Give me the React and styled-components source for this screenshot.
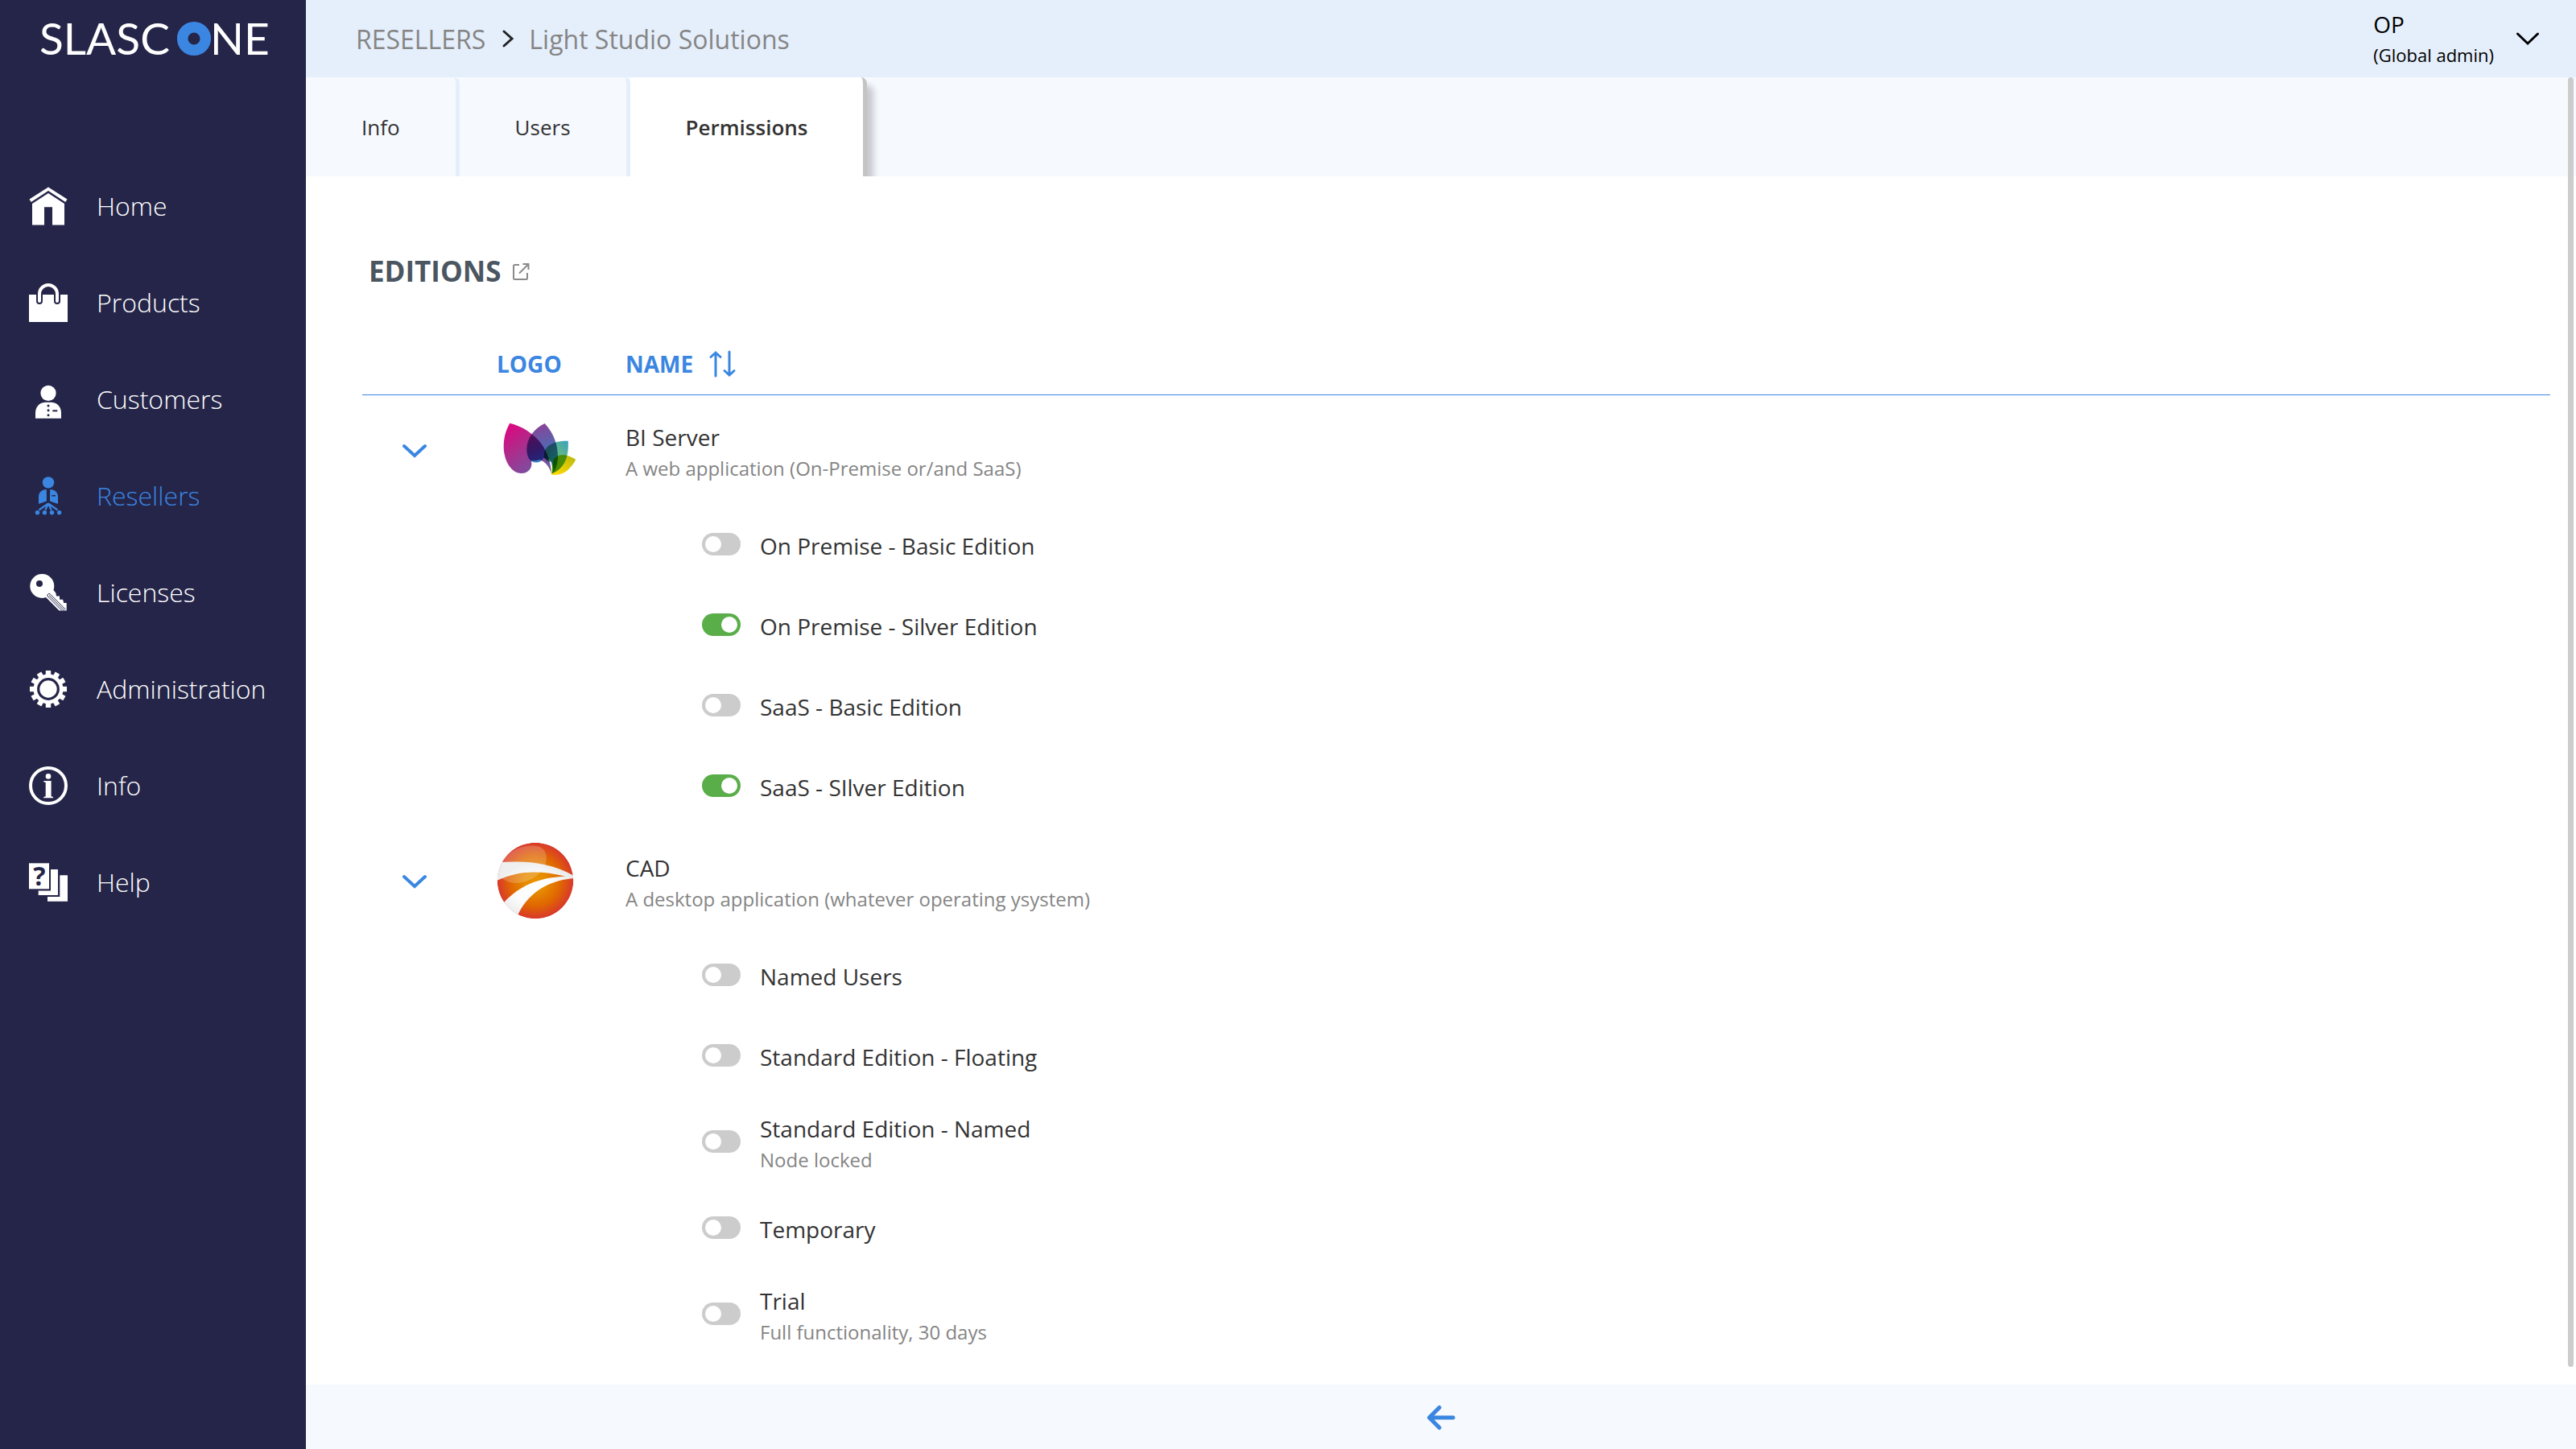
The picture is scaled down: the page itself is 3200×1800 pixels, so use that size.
import React, { useState } from 'react';
import styled, { createGlobalStyle } from 'styled-components';

const GlobalStyle = createGlobalStyle`
  * {
    box-sizing: border-box;
  }

  body {
    margin: 0;
    background: #fff;
    color: #333;
    font-family: 'Open Sans', sans-serif;
    font-size: 28px;
  }

  svg {
    display: block;
    flex-shrink: 0;
    overflow: visible;
  }

  button {
    padding: 0;
    border: none;
    background: none;
    color: inherit;
    font: inherit;
    cursor: pointer;
  }

  a {
    color: inherit;
    text-decoration: none;
  }
`;

const Page = styled.div`
  display: flex;
  min-height: 100vh;
`;

const Sidebar = styled.aside`
  width: 380px;
  flex-shrink: 0;
  background: #252549;
  color: #fff;
`;

const LogoLink = styled.a`
  display: flex;
  align-items: center;
  justify-content: center;
  height: 96px;
`;

const LogoText = styled.text`
  font-family: Lato, sans-serif;
  font-size: 55px;
  fill: #fff;
`;

const Nav = styled.nav`
  display: flex;
  flex-direction: column;
  padding-top: 100px;
`;

const NavItem = styled.a`
  display: flex;
  align-items: center;
  gap: 36px;
  height: 120px;
  padding-left: 36px;
  font-size: 32px;
  font-weight: 300;
  color: ${({ $active }) => ($active ? '#3b86e1' : '#fff')};

  span {
    padding-bottom: 2px;
  }
`;

const IconText = styled.text`
  font-family: 'Open Sans', sans-serif;
  font-size: 32px;
  font-weight: 700;
  fill: #252549;
`;

const Main = styled.main`
  display: flex;
  flex: 1;
  flex-direction: column;
  min-width: 0;
`;

const Header = styled.header`
  display: flex;
  align-items: center;
  justify-content: space-between;
  height: 96px;
  padding: 0 46px 0 62px;
  background: #e5effc;
`;

const Breadcrumb = styled.nav`
  display: flex;
  align-items: center;
  gap: 18px;
  font-size: 32px;
  color: #858585;
`;

const UserMenu = styled.button`
  display: flex;
  align-items: center;
  gap: 28px;
  color: #000;
  text-align: left;
`;

const UserName = styled.div`
  font-size: 28px;
  line-height: 40px;
`;

const UserRole = styled.div`
  font-size: 22px;
  line-height: 36px;
`;

const Body = styled.div`
  position: relative;
  flex: 1;
`;

const ScrollThumb = styled.div`
  position: absolute;
  top: 0;
  right: 3px;
  bottom: 22px;
  width: 7px;
  border-radius: 4px;
  background: #ccc;
`;

const Tabs = styled.div`
  display: flex;
  height: 123px;
  overflow: hidden;
  background: #f6f9fe;
`;

const Tab = styled.button`
  padding: 0 69px;
  border-right: 5px solid #e5effc;
  border-top-right-radius: 8px;
  font-size: 26px;
  color: #333;

  &.active {
    border-right-color: #c4c4c4;
    background: #fff;
    box-shadow: 8px 10px 8px rgba(0, 0, 0, 0.2);
    font-weight: 600;
  }
`;

const Section = styled.section`
  padding: 94px 32px 31px 70px;
`;

const SectionTitle = styled.h2`
  display: flex;
  align-items: center;
  gap: 12px;
  margin: 0 0 50px;
  padding-left: 8px;
  font-size: 35px;
  font-weight: 700;
  line-height: 48px;
  color: #4b5661;
`;

const Table = styled.table`
  width: 100%;
  table-layout: fixed;
  border-spacing: 0;

  td {
    padding: 0;
  }
`;

const Col = styled.col`
  width: ${({ $width }) => $width};
`;

const Th = styled.th`
  height: 80px;
  padding: 2px 0 0;
  border-bottom: 1px solid #3b86e1;
  font-weight: 700;
  text-align: left;
  color: #3b86e1;
`;

const SortButton = styled.button`
  display: flex;
  align-items: center;
  gap: 20px;
`;

const ProductRow = styled.tr`
  height: 135px;
`;

const ExpandButton = styled.button`
  display: block;
  margin-left: 50px;
  padding-top: 2px;
  color: #3b86e1;
`;

const ProductLogo = styled.svg`
  isolation: isolate;

  .petal {
    mix-blend-mode: multiply;
  }
`;

const Text = styled.div`
  padding-top: 4px;
`;

const Title = styled.div`
  font-size: 28px;
  line-height: 42px;
`;

const Description = styled.div`
  font-size: 24px;
  line-height: 36px;
  color: #858585;
`;

const Edition = styled.label`
  display: flex;
  align-items: center;
  gap: 24px;
  height: ${({ $tall }) => ($tall ? '114px' : '100px')};
  padding-left: 95px;
  cursor: pointer;
`;

const Toggle = styled.input`
  display: flex;
  align-items: center;
  width: 48px;
  height: 28px;
  margin: 0;
  padding: 0 4px;
  appearance: none;
  border-radius: 14px;
  background: #ccc;
  cursor: pointer;

  &::before {
    content: '';
    width: 20px;
    height: 20px;
    border-radius: 50%;
    background: #fff;
  }

  &:checked {
    justify-content: flex-end;
    background: #5aae4a;
  }
`;

const Footer = styled.footer`
  display: flex;
  align-items: center;
  justify-content: center;
  height: 80px;
  padding-top: 2px;
  background: #f6f9fe;
  color: #3b86e1;
`;

const NavIcon = ({ children }) => (
  <svg width='48' height='48' viewBox='0 0 48 48' fill='currentColor'>
    {children}
  </svg>
);

const HomeIcon = () => (
  <NavIcon>
    <path d='M24 .6 47.5 15.6 45.3 19 24 5 2.7 19 .5 15.6Z' />
    <path d='M24 8 44 21V47.5H29V25.3H19V47.5H4V21Z' />
  </NavIcon>
);

const ProductsIcon = () => (
  <NavIcon>
    <path d='M0 14H48V48H0Z' />
    <path
      d='M13 22V13a11 11 0 0 1 22 0V22'
      fill='none'
      stroke='#252549'
      strokeWidth='8'
      strokeLinecap='round'
    />
    <path
      d='M13 22V13a11 11 0 0 1 22 0V22'
      fill='none'
      stroke='currentColor'
      strokeWidth='4'
      strokeLinecap='round'
    />
  </NavIcon>
);

const CustomersIcon = () => (
  <NavIcon>
    <circle cx='24' cy='16.4' r='9.6' />
    <path d='M8 47.7V41C8 33 13.5 27.7 20.5 27.7H27.5C34.5 27.7 40 33 40 41V47.7Z' />
    <g fill='#252549'>
      <circle cx='24' cy='32' r='1.5' />
      <circle cx='24' cy='37.8' r='1.5' />
      <circle cx='24' cy='43.7' r='1.5' />
      <path d='M29.3 37.3H35.3V39.3H29.3Z' />
    </g>
  </NavIcon>
);

const ResellersIcon = () => (
  <NavIcon>
    <circle cx='24' cy='7.4' r='7.2' />
    <path d='M21.8 16C15.5 16 12 20 12 25V34L22 30.6Z' />
    <path d='M26.2 16C32.5 16 36 20 36 25V34L26 30.6Z' />
    <path d='M22.7 17.5H25.3L25.8 28 24 30 22.2 28Z' fill='#252549' />
    <path d='M28.3 23H33V24.5H28.3Z' fill='#252549' />
    <path
      d='M24 33.5 12.5 41.5M24 33.5 20.3 41.5M24 33.5 27.7 41.5M24 33.5 35.5 41.5'
      stroke='currentColor'
      strokeWidth='2.2'
    />
    <circle cx='10.5' cy='44.7' r='2.7' />
    <circle cx='19.4' cy='44.7' r='2.7' />
    <circle cx='28.5' cy='44.7' r='2.7' />
    <circle cx='37.6' cy='44.7' r='2.7' />
  </NavIcon>
);

const LicensesIcon = () => (
  <NavIcon>
    <path d='M20.5 29.5 37.5 46.5H46.7V37H43.3L42 32.7H38V28.4H34L33.3 24.5 29.5 20Z' />
    <circle cx='16.3' cy='16' r='15' />
    <circle cx='13' cy='13' r='4' fill='#252549' />
    <path
      d='M41 46.5 23.5 29 22.8 27 24.5 25.3 26.3 26 45.5 45.2M25 27.6 44 46.5'
      fill='none'
      stroke='#252549'
      strokeWidth='1'
    />
  </NavIcon>
);

const AdministrationIcon = () => (
  <NavIcon>
    {Array.from({ length: 12 }, (_, i) => (
      <rect
        key={i}
        x='20.8'
        y='1'
        width='6.4'
        height='8'
        transform={`rotate(${i * 30} 24 24)`}
      />
    ))}
    <circle
      cx='24'
      cy='24'
      r='16.2'
      fill='none'
      stroke='currentColor'
      strokeWidth='4.6'
    />
    <circle cx='24' cy='24' r='10.7' />
  </NavIcon>
);

const InfoIcon = () => (
  <NavIcon>
    <circle
      cx='24'
      cy='24'
      r='22'
      fill='none'
      stroke='currentColor'
      strokeWidth='4'
    />
    <circle cx='24' cy='12.4' r='3.3' />
    <path d='M18.2 18H27.6V37.2L30 38V39.2H18.2V38L20.7 37.2V20L18.2 19.3Z' />
  </NavIcon>
);

const HelpIcon = () => (
  <NavIcon>
    <path d='M0 .3H25V32.3H0Z' />
    <path d='M27 8H36V40H11.7V34.4H27Z' />
    <path d='M38.3 15.3H48V47.8H23V42H38.3Z' />
    <IconText x='13' y='28' textAnchor='middle'>
      ?
    </IconText>
  </NavIcon>
);

const Chevron = ({ width = 30, height = 18, stroke = 4 }) => (
  <svg
    width={width}
    height={height}
    viewBox={`0 0 ${width} ${height}`}
    fill='none'
    stroke='currentColor'
    strokeWidth={stroke}
    strokeLinecap='round'
  >
    <path d={`M${stroke / 2} 3 ${width / 2} ${height - 3} ${width - stroke / 2} 3`} />
  </svg>
);

const BiServerLogo = () => (
  <ProductLogo width='100' height='96' viewBox='0 0 100 96'>
    <defs>
      <linearGradient id='magenta' x1='0' y1='0' x2='.7' y2='1'>
        <stop offset='0' stopColor='#e6007e' />
        <stop offset='.45' stopColor='#b02a8a' />
        <stop offset='1' stopColor='#6f57a5' />
      </linearGradient>
      <linearGradient id='purple' x1='.3' y1='0' x2='.5' y2='1'>
        <stop offset='0' stopColor='#8f3f97' />
        <stop offset='.5' stopColor='#5567b0' />
        <stop offset='1' stopColor='#2aa9e0' />
      </linearGradient>
      <linearGradient id='green' x1='1' y1='0' x2='.2' y2='1'>
        <stop offset='0' stopColor='#3a9fc0' />
        <stop offset='.4' stopColor='#5fb88c' />
        <stop offset='1' stopColor='#3a9a50' />
      </linearGradient>
      <linearGradient id='yellow' x1='1' y1='0' x2='.2' y2='1'>
        <stop offset='0' stopColor='#b5b70f' />
        <stop offset='1' stopColor='#ffd900' />
      </linearGradient>
    </defs>
    <path
      className='petal'
      fill='url(#magenta)'
      d='M16.3 14.7C31 18 47 28 56 41C63 51 67 63 68 77.5C65 68 60 62 53 60C49 62 46 61 43 61.5C45 71 39 77 30.7 77C18 77 8.7 61 8.7 44C8.7 33 11 24 16.3 14.7Z'
    />
    <path
      className='petal'
      fill='url(#purple)'
      d='M59.7 15C71 27 76 42 76 56C76 65 73.5 73 68.5 77.5C70 71 69 66 66 60L58 58C56 62 53 63.5 49 63.5C41 63.5 37.3 56 37.3 47C37.3 33 47 21 59.7 15Z'
    />
    <path
      className='petal'
      fill='url(#green)'
      d='M88.7 36.7C90 57 84 71 68.5 77.5C72 72 70 67 68.5 62C64 64 58.7 60 58.7 54C59 42 73 36 88.7 36.7Z'
    />
    <path
      className='petal'
      fill='url(#yellow)'
      d='M98.3 59.7C92 72 82 81 68 78.5C69 72 68 67 70 62C73 52 87 52 98.3 59.7Z'
    />
  </ProductLogo>
);

const CadLogo = () => (
  <ProductLogo width='96' height='96' viewBox='0 0 96 96'>
    <defs>
      <radialGradient id='ball' cx='.5' cy='.5' r='.5'>
        <stop offset='0' stopColor='#ea9400' />
        <stop offset='.3' stopColor='#e68a00' />
        <stop offset='.65' stopColor='#e06800' />
        <stop offset='1' stopColor='#d9382b' />
      </radialGradient>
      <radialGradient id='band' cx='.5' cy='.5' r='.5'>
        <stop offset='0' stopColor='#fff' />
        <stop offset='.5' stopColor='#fcfcfc' />
        <stop offset='1' stopColor='#ebebeb' />
      </radialGradient>
      <clipPath id='ballClip'>
        <circle cx='48' cy='48' r='47.3' />
      </clipPath>
    </defs>
    <g clipPath='url(#ballClip)'>
      <circle cx='48' cy='48' r='47.3' fill='url(#ball)' />
      <path
        fill='url(#band)'
        d='M0 25.5C34 23 64 24 96 42V45C72 47 42 57 26 91L14 96 0 82 9 75C28 55 50 44.5 85 42.5C55 35.5 28 34.5 0 48Z'
      />
      <path
        fill='#fff'
        fillOpacity='.2'
        d='M7 24C17 9 32 4.5 44 4.5C58 4.5 64 13 61 26C57 41 38 51 24 51C15 51 8 47 5 43Z'
      />
    </g>
  </ProductLogo>
);

const navItems = [
  { label: 'Home', icon: HomeIcon },
  { label: 'Products', icon: ProductsIcon },
  { label: 'Customers', icon: CustomersIcon },
  { label: 'Resellers', icon: ResellersIcon },
  { label: 'Licenses', icon: LicensesIcon },
  { label: 'Administration', icon: AdministrationIcon },
  { label: 'Info', icon: InfoIcon },
  { label: 'Help', icon: HelpIcon },
];

const tabs = ['Info', 'Users', 'Permissions'];

const products = [
  {
    name: 'BI Server',
    description: 'A web application (On-Premise or/and SaaS)',
    logo: BiServerLogo,
    editions: [
      { name: 'On Premise - Basic Edition' },
      { name: 'On Premise - Silver Edition', enabled: true },
      { name: 'SaaS - Basic Edition' },
      { name: 'SaaS - SIlver Edition', enabled: true },
    ],
  },
  {
    name: 'CAD',
    description: 'A desktop application (whatever operating ysystem)',
    logo: CadLogo,
    editions: [
      { name: 'Named Users' },
      { name: 'Standard Edition - Floating' },
      { name: 'Standard Edition - Named', description: 'Node locked' },
      { name: 'Temporary' },
      { name: 'Trial', description: 'Full functionality, 30 days' },
    ],
  },
];

const Product = ({ product }) => {
  const [isOpen, setIsOpen] = useState(true);
  const Logo = product.logo;

  return (
    <tbody>
      <ProductRow>
        <td>
          <ExpandButton
            aria-label={`Toggle ${product.name}`}
            aria-expanded={isOpen}
            onClick={() => setIsOpen(!isOpen)}
          >
            <Chevron />
          </ExpandButton>
        </td>
        <td>
          <Logo />
        </td>
        <td>
          <Text>
            <Title>{product.name}</Title>
            <Description>{product.description}</Description>
          </Text>
        </td>
      </ProductRow>
      {isOpen &&
        product.editions.map((edition) => (
          <tr key={edition.name}>
            <td colSpan={2} />
            <td>
              <Edition $tall={!!edition.description}>
                <Toggle
                  type='checkbox'
                  role='switch'
                  defaultChecked={edition.enabled}
                />
                <Text>
                  <Title>{edition.name}</Title>
                  {edition.description && (
                    <Description>{edition.description}</Description>
                  )}
                </Text>
              </Edition>
            </td>
          </tr>
        ))}
    </tbody>
  );
};

const App = () => {
  const [activeTab, setActiveTab] = useState('Permissions');

  return (
    <Page>
      <GlobalStyle />
      <Sidebar>
        <LogoLink href='#' aria-label='Slascone'>
          <svg width='284' height='72' viewBox='0 0 284 72'>
            <LogoText x='1' y='56'>
              SLASC
            </LogoText>
            <circle
              cx='193'
              cy='36'
              r='14.3'
              fill='none'
              stroke='#3b86e1'
              strokeWidth='13.5'
            />
            <LogoText x='213' y='56'>
              NE
            </LogoText>
          </svg>
        </LogoLink>
        <Nav>
          {navItems.map(({ label, icon: Icon }) => (
            <NavItem key={label} href='#' $active={label === 'Resellers'}>
              <Icon />
              <span>{label}</span>
            </NavItem>
          ))}
        </Nav>
      </Sidebar>
      <Main>
        <Header>
          <Breadcrumb>
            <a href='#'>RESELLERS</a>
            <svg width='18' height='24' viewBox='0 0 18 24' fill='none'>
              <path
                d='M5 3 15 12 5 21'
                stroke='#222'
                strokeWidth='3'
                strokeLinecap='round'
              />
            </svg>
            <span>Light Studio Solutions</span>
          </Breadcrumb>
          <UserMenu>
            <div>
              <UserName>OP</UserName>
              <UserRole>(Global admin)</UserRole>
            </div>
            <Chevron width={28} height={18} stroke={3} />
          </UserMenu>
        </Header>
        <Body>
          <Tabs>
            {tabs.map((tab) => (
              <Tab
                key={tab}
                className={tab === activeTab ? 'active' : ''}
                onClick={() => setActiveTab(tab)}
              >
                {tab}
              </Tab>
            ))}
          </Tabs>
          <Section>
            <SectionTitle>
              EDITIONS
              <a href='#' aria-label='Open editions'>
                <svg
                  width='24'
                  height='24'
                  viewBox='0 0 24 24'
                  fill='none'
                  stroke='#8a8a8a'
                  strokeWidth='2'
                >
                  <path d='M10 4H4.5Q3 4 3 5.5V20.5Q3 22 4.5 22H18.5Q20 22 20 20.5V14' />
                  <path d='M10 14.5 21.5 3M14.5 3H21.5V10' />
                </svg>
              </a>
            </SectionTitle>
            <Table>
              <colgroup>
                <Col $width='167px' />
                <Col $width='160px' />
                <Col $width='auto' />
              </colgroup>
              <thead>
                <tr>
                  <Th />
                  <Th>LOGO</Th>
                  <Th>
                    <SortButton>
                      NAME
                      <svg
                        width='32'
                        height='34'
                        viewBox='0 0 32 34'
                        fill='none'
                        stroke='currentColor'
                        strokeWidth='3'
                        strokeLinecap='round'
                      >
                        <path d='M8 32V3M2 8.5 8 3 14 8.5' />
                        <path d='M25 2V31M19 25.5 25 31 31 25.5' />
                      </svg>
                    </SortButton>
                  </Th>
                </tr>
              </thead>
              {products.map((product) => (
                <Product key={product.name} product={product} />
              ))}
            </Table>
          </Section>
          <ScrollThumb />
        </Body>
        <Footer>
          <button aria-label='Back'>
            <svg
              width='36'
              height='32'
              viewBox='0 0 36 32'
              fill='none'
              stroke='currentColor'
              strokeWidth='5'
              strokeLinecap='round'
              strokeLinejoin='round'
            >
              <path d='M33 16H4M16 3.5 3.5 16 16 28.5' />
            </svg>
          </button>
        </Footer>
      </Main>
    </Page>
  );
};

export default App;
